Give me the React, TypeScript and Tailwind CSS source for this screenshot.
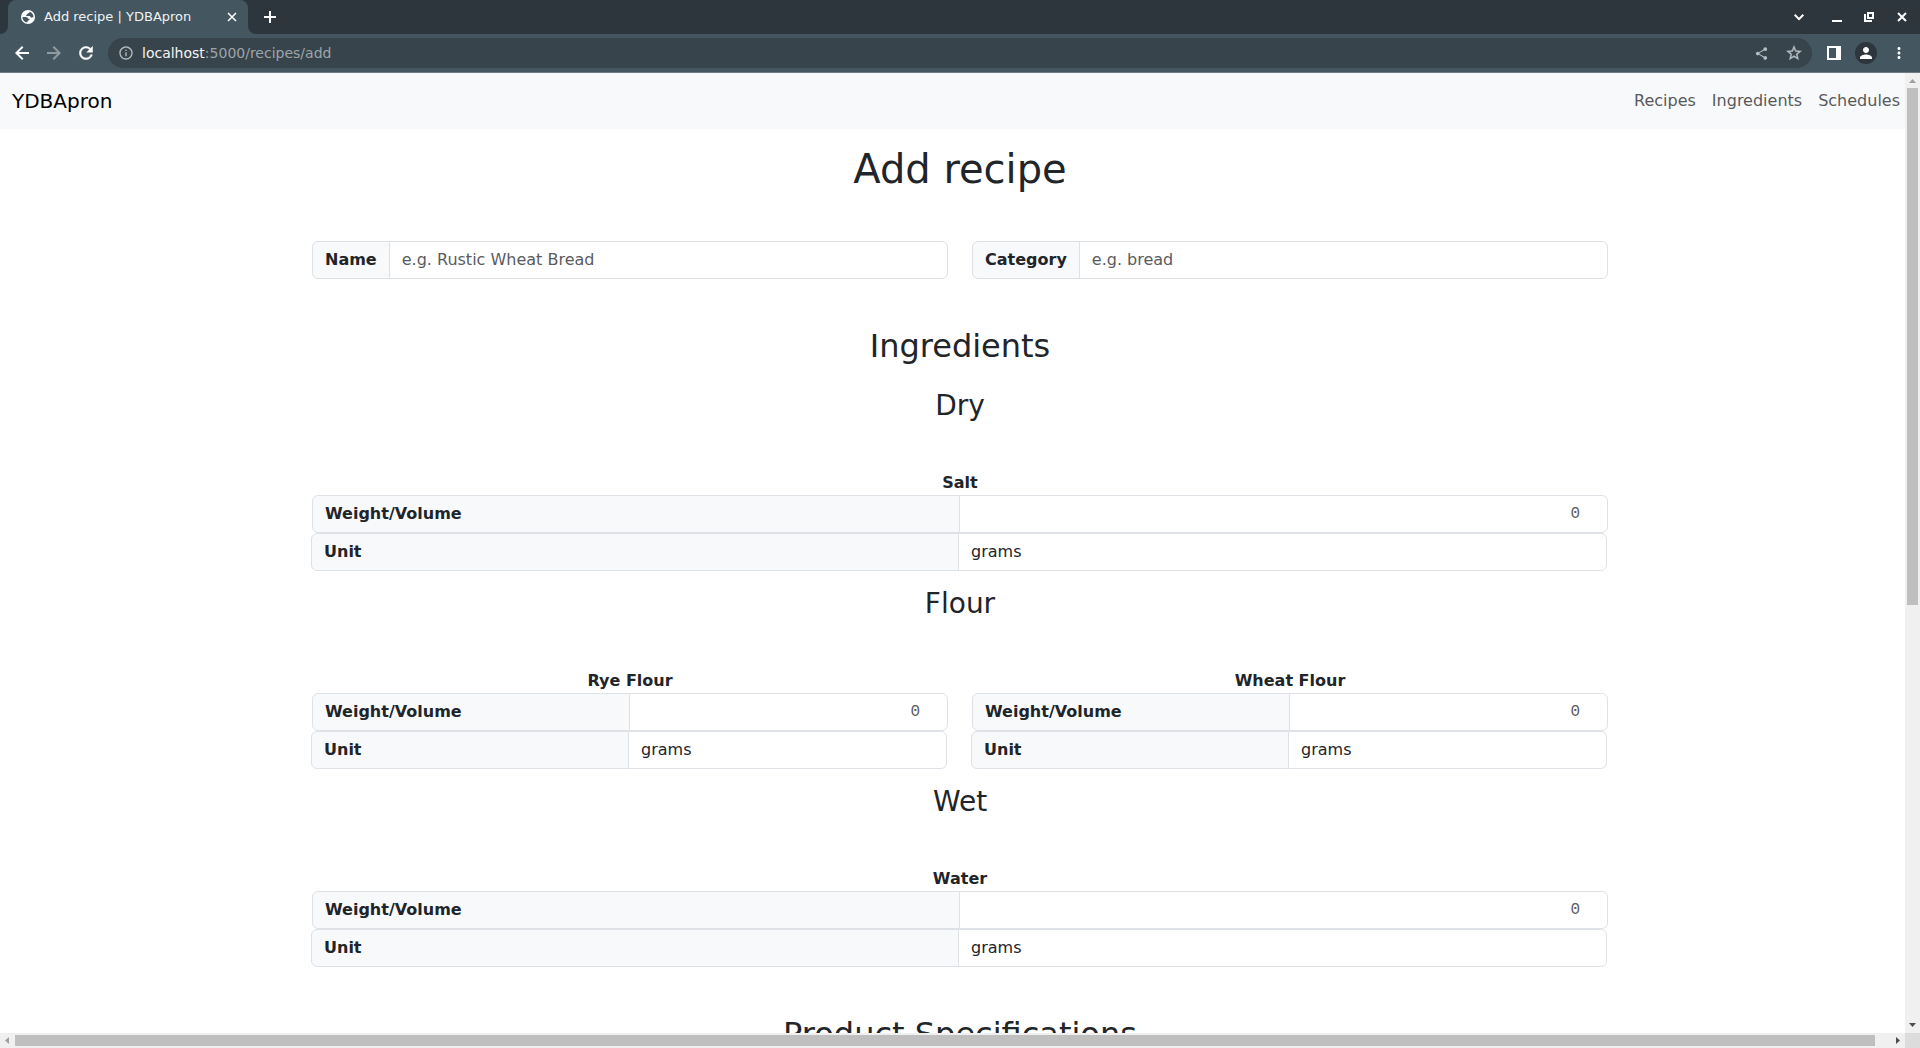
import type { ReactNode } from "react";
import { MdInfoOutline, MdMoreVert, MdPerson, MdShare } from "react-icons/md";

function Cross({ className }: { className: string }) {
  return (
    <svg viewBox="0 0 10 10" className={className} fill="none" stroke="currentColor">
      <path d="M1 1 9 9M9 1 1 9" />
    </svg>
  );
}

function Globe() {
  return (
    <svg viewBox="0 0 14 14" className="size-[14px]">
      <circle cx="7" cy="7" r="7" fill="#fff" />
      <path
        d="M8.6 1.7C8.8 3 7.2 3 6.6 3.5 6 4 6.4 4.6 5.6 4.9 4.8 5.2 4.9 6 5.8 6H8.6C9.5 6 9.2 7.4 10.2 7.6 11 7.8 11.2 7.1 12.5 7.3 12.6 4.8 11 2.4 8.6 1.7Z"
        fill="#445760"
      />
      <path
        d="M1.5 7H4.6C6.6 7 7 8 7 8.8H8.2C9 9.2 8.6 10.4 7.4 10.4 6.2 10.4 6.8 11.4 6.2 12.4 3.6 12.2 1.4 10 1.5 7Z"
        fill="#445760"
      />
    </svg>
  );
}

function Arrow({ d }: { d: string }) {
  return (
    <svg viewBox="0 0 14 14" className="size-[14px]" fill="none" stroke="currentColor" strokeWidth="2">
      <path d={d} />
    </svg>
  );
}

function TabStrip() {
  return (
    <div className="flex h-[34px] items-stretch bg-[#2c363c] text-white">
      <div className="flex w-2 items-end bg-[#445760]">
        <div className="h-full w-2 rounded-br-lg bg-[#2c363c]" />
      </div>
      <div className="bg-[#2c363c]">
        <div className="flex h-full w-60 items-center rounded-t-lg bg-[#445760] pr-[11px] pl-[13px]">
          <Globe />
          <span className="ml-[9px] grow text-[13px] leading-4 text-[#eef2f4]">Add recipe | YDBApron</span>
          <button type="button" aria-label="Close tab">
            <Cross className="size-[10px] stroke-[1.5]" />
          </button>
        </div>
      </div>
      <div className="w-2 bg-[#445760]">
        <div className="h-full rounded-bl-lg bg-[#2c363c]" />
      </div>
      <button type="button" aria-label="New tab" className="ml-2">
        <svg viewBox="0 0 12 12" className="size-3" fill="none" stroke="currentColor" strokeWidth="2">
          <path d="M6 0V12M0 6H12" />
        </svg>
      </button>
      <div className="ml-auto flex items-center pr-[13px]">
        <button type="button" aria-label="Search tabs" className="mr-7">
          <svg viewBox="0 0 10 10" className="size-[10px]" fill="none" stroke="currentColor" strokeWidth="2">
            <path d="M.7 2.8 5 7.1 9.3 2.8" />
          </svg>
        </button>
        <button type="button" aria-label="Minimize" className="mr-[22px]">
          <svg viewBox="0 0 10 10" className="size-[10px]" fill="currentColor">
            <path d="M0 8h10v2H0z" />
          </svg>
        </button>
        <button type="button" aria-label="Restore" className="mr-[23px]">
          <svg viewBox="0 0 10 10" className="size-[10px]" fill="none" stroke="currentColor" strokeWidth="2">
            <path d="M4 1H9V6H4zM1 2V9H8" />
          </svg>
        </button>
        <button type="button" aria-label="Close window">
          <Cross className="size-[10px] stroke-2" />
        </button>
      </div>
    </div>
  );
}

function Toolbar() {
  return (
    <div className="flex h-[39px] items-center border-b border-[#6d7b82] bg-[#445760] pr-3 pl-[15px] text-white">
      <button type="button" aria-label="Back">
        <Arrow d="M14 7H1.5M7.7.7 1.4 7 7.7 13.3" />
      </button>
      <button type="button" aria-label="Forward" className="ml-[18px] text-[#8f9ba1]">
        <Arrow d="M0 7H12.5M6.3.7 12.6 7 6.3 13.3" />
      </button>
      <button type="button" aria-label="Reload" className="ml-[18px]">
        <svg viewBox="3.5 3.5 17 17" className="size-[14px]" fill="currentColor" stroke="currentColor" strokeWidth="0.6">
          <path d="M17.65 6.35A7.958 7.958 0 0 0 12 4c-4.42 0-8 3.58-8 8s3.57 8 8 8c3.73 0 6.84-2.55 7.73-6h-2.08A5.99 5.99 0 0 1 12 18c-3.31 0-6-2.69-6-6s2.69-6 6-6c1.66 0 3.14.69 4.22 1.78L13 11h7V4l-2.35 2.35z" />
        </svg>
      </button>
      <div className="ml-[15px] flex h-[30px] grow items-center rounded-full bg-[#38444b] pr-[9px] pl-2.5 text-[#b4bcc1]">
        <MdInfoOutline className="size-4" />
        <div className="ml-2 grow text-sm leading-5 text-[#9da5aa]">
          <span className="text-[#f3f5f6]">localhost</span>:5000/recipes/add
        </div>
        <button type="button" aria-label="Share">
          <MdShare className="size-[15px]" />
        </button>
        <button type="button" aria-label="Bookmark" className="ml-4">
          <svg viewBox="0 0 24 24" className="size-[18px]" fill="currentColor" stroke="currentColor" strokeWidth="0.5">
            <path d="m22 9.24-7.19-.62L12 2 9.19 8.63 2 9.24l5.46 4.73L5.82 21 12 17.27 18.18 21l-1.63-7.03L22 9.24zM12 15.4l-3.76 2.27 1-4.28-3.32-2.88 4.38-.38L12 6.1l1.71 4.04 4.38.38-3.32 2.88 1 4.28L12 15.4z" />
          </svg>
        </button>
      </div>
      <button type="button" aria-label="Side panel" className="ml-[15px]">
        <svg viewBox="0 0 14 14" className="size-[14px]" fill="currentColor">
          <path fillRule="evenodd" d="M0 0h14v14H0zM2 2v10h7V2z" />
        </svg>
      </button>
      <button
        type="button"
        aria-label="Profile"
        className="ml-3.5 flex size-[22px] items-center justify-center rounded-full bg-[#2c363c]"
      >
        <MdPerson className="size-[18px]" />
      </button>
      <button type="button" aria-label="Menu" className="ml-[13px]">
        <MdMoreVert className="size-[18px]" />
      </button>
    </div>
  );
}

const labelClass =
  "flex items-center rounded-l-md border border-[#dee2e6] bg-[#f8f9fb] px-3 font-bold";
const controlClass =
  "-ml-px min-w-0 rounded-r-md border border-[#dee2e6] bg-white px-3 py-1.5 leading-6 text-[#212529] placeholder:text-[#595c5f] placeholder:opacity-100";

function TextField({ id, label, placeholder }: { id: string; label: string; placeholder: string }) {
  return (
    <div className="flex">
      <label htmlFor={id} className={labelClass}>
        {label}
      </label>
      <input id={id} type="text" placeholder={placeholder} className={`${controlClass} flex-1`} />
    </div>
  );
}

function Ingredient({ name }: { name: string }) {
  const key = name.toLowerCase().replace(" ", "-");
  return (
    <div>
      <p className="text-center font-bold">{name}</p>
      <div className="flex">
        <label htmlFor={`${key}-amount`} className={`${labelClass} w-1/2`}>
          Weight/Volume
        </label>
        <input
          id={`${key}-amount`}
          type="number"
          placeholder="0"
          className={`${controlClass} flex-1 text-right font-['Liberation_Mono',monospace]`}
        />
      </div>
      <div className="mr-px -ml-px flex">
        <label htmlFor={`${key}-unit`} className={`${labelClass} w-1/2`}>
          Unit
        </label>
        <select id={`${key}-unit`} className={`${controlClass} flex-1 appearance-none`}>
          <option>grams</option>
        </select>
      </div>
    </div>
  );
}

function Group({ title, children }: { title: string; children: ReactNode }) {
  return (
    <section className="pt-4">
      <h3 className="mb-12 text-center text-[28px] leading-[34px]">{title}</h3>
      <div className="grid auto-cols-fr grid-flow-col gap-6">{children}</div>
    </section>
  );
}

function ScrollArrow({ d, className }: { d: string; className: string }) {
  return (
    <svg viewBox="0 0 15 15" className={`size-[15px] shrink-0 ${className}`} fill="currentColor">
      <path d={d} />
    </svg>
  );
}

export default function App() {
  return (
    <div className="flex h-screen flex-col overflow-hidden bg-white font-['DejaVu_Sans',sans-serif] text-base text-[#212529]">
      <TabStrip />
      <Toolbar />
      <div className="flex min-h-0 flex-1">
        <div className="min-w-0 flex-1 overflow-hidden">
          <nav className="flex h-14 items-center justify-between bg-[#f8f9fb] pr-[5px] pl-3">
            <a href="#" className="text-xl leading-[30px] text-black">
              YDBApron
            </a>
            <div className="flex gap-4 text-[#595a5b]">
              <a href="#recipes">Recipes</a>
              <a href="#ingredients">Ingredients</a>
              <a href="#schedules">Schedules</a>
            </div>
          </nav>
          <main className="-mr-[15px] pt-4">
            <form className="mx-auto max-w-[1320px] px-3">
              <h1 className="mb-12 text-center text-[40px] leading-[48px]">Add recipe</h1>
              <div className="grid grid-cols-2 gap-6">
                <TextField id="name" label="Name" placeholder="e.g. Rustic Wheat Bread" />
                <TextField id="category" label="Category" placeholder="e.g. bread" />
              </div>
              <h2 className="mt-12 mb-2 text-center text-[32px] leading-[38px]">Ingredients</h2>
              <Group title="Dry">
                <Ingredient name="Salt" />
              </Group>
              <Group title="Flour">
                <Ingredient name="Rye Flour" />
                <Ingredient name="Wheat Flour" />
              </Group>
              <Group title="Wet">
                <Ingredient name="Water" />
              </Group>
              <h2 className="mt-12 mb-2 text-center text-[32px] leading-[38px]">Product Specifications</h2>
            </form>
          </main>
        </div>
        <div className="flex w-[15px] flex-col bg-[#f0f0f0]">
          <ScrollArrow d="M4 10 7.5 6 11 10z" className="text-[#a0a0a0]" />
          <div className="min-h-0 flex-1 px-0.5">
            <div className="h-[55.6%] bg-[#bfbfbf]" />
          </div>
          <ScrollArrow d="M4 5 7.5 9 11 5z" className="text-[#4d4d4d]" />
        </div>
      </div>
      <div className="flex h-[15px] shrink-0 bg-[#f0f0f0]">
        <ScrollArrow d="M9 4 5 7.5 9 11z" className="text-[#a0a0a0]" />
        <div className="min-w-0 flex-1 py-0.5">
          <div className="h-full w-[99.2%] bg-[#bfbfbf]" />
        </div>
        <ScrollArrow d="M6 4 10 7.5 6 11z" className="text-[#4d4d4d]" />
        <div className="w-[15px] bg-[#dcdcdc]" />
      </div>
    </div>
  );
}
